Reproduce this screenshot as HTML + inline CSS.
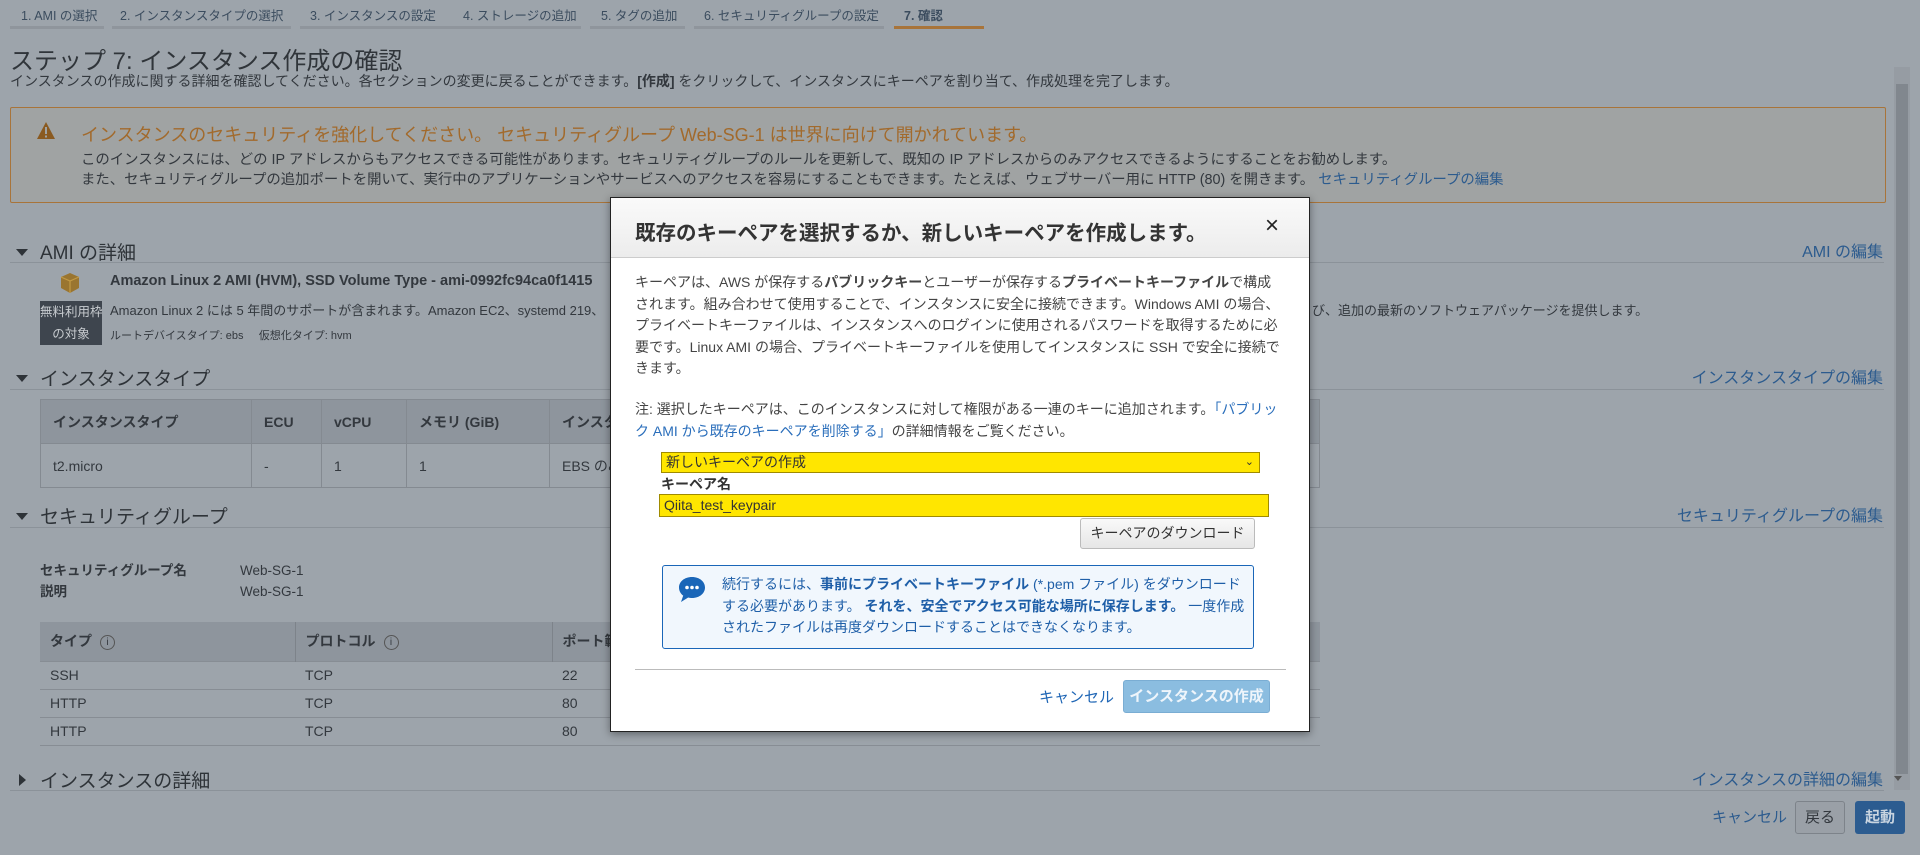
<!DOCTYPE html>
<html><head><meta charset="utf-8">
<style>
*{margin:0;padding:0;box-sizing:border-box}
body{width:1920px;height:855px;overflow:hidden;background:#9da4ab;font-family:"Liberation Sans","Noto Sans CJK JP",sans-serif;color:#33383e;position:relative;font-size:14px}
.a{position:absolute;white-space:nowrap}
.tab{position:absolute;top:5px;font-size:12.5px;color:#3b4c5e}
.tl{position:absolute;top:26px;height:3px;background:#8f959c}
.lnk{color:#2c5b8e}
.sec{position:absolute;left:14px;font-size:19px;color:#2e3338}
.sec:before{content:"";display:inline-block;border-left:6px solid transparent;border-right:6px solid transparent;border-top:7px solid #2e3338;margin:0 12px 3px 2px;vertical-align:middle}
.sec.r:before{border-top:6px solid transparent;border-bottom:6px solid transparent;border-left:7px solid #2e3338;border-right:0;margin:0 14px 3px 5px}
.hl{position:absolute;left:10px;width:1874px;height:1px;background:#8b9299}
.edit{position:absolute;right:37px;font-size:16px;color:#2c5b8e}
table{border-collapse:collapse;position:absolute}
.t1 td,.t1 th{border:1px solid #848a91;text-align:left;padding:0 12px;font-size:14px}
.t1 th{background:#8e959d;height:44px;font-weight:bold;color:#33383e}
.t1 td{height:44px}
.t2 th{background:#8e959d;height:39px;text-align:left;padding:0 10px;font-size:14px;font-weight:bold}
.t2 td{height:28px;border-top:1px solid #878d94;padding:0 10px;font-size:14px}
.t2 tr:last-child td{border-bottom:1px solid #878d94}
.ii{display:inline-block;width:15px;height:15px;border:1px solid #555;border-radius:50%;font-size:10px;text-align:center;line-height:13px;font-weight:normal;margin-left:8px;vertical-align:middle}
.modal{position:absolute;left:610px;top:197px;width:700px;height:535px;background:#fff;border:1px solid #222;box-shadow:0 2px 8px rgba(0,0,0,.4)}
.mh{height:60px;background:linear-gradient(#fafafa,#ececec);border-bottom:1px solid #ccc;position:relative}
.mb{font-size:14px;color:#444;line-height:21.5px}
</style></head><body>
<div class="tab" style="left:21px">1. AMI の選択</div>
<div class="tab" style="left:120px">2. インスタンスタイプの選択</div>
<div class="tab" style="left:310px">3. インスタンスの設定</div>
<div class="tab" style="left:463px">4. ストレージの追加</div>
<div class="tab" style="left:601px">5. タグの追加</div>
<div class="tab" style="left:704px">6. セキュリティグループの設定</div>
<div class="tab" style="left:904px;font-weight:bold">7. 確認</div>
<div class="tl" style="left:10px;width:94px"></div><div class="tl" style="left:112px;width:179px"></div><div class="tl" style="left:300px;width:152px"></div><div class="tl" style="left:452px;width:129px"></div><div class="tl" style="left:590px;width:95px"></div><div class="tl" style="left:694px;width:190px"></div><div class="tl" style="left:894px;width:90px;background:#a8743a"></div>

<div class="a" style="left:10px;top:41px;font-size:24px;color:#30353a">ステップ 7: インスタンス作成の確認</div>
<div class="a" style="left:10px;top:71px;font-size:14px">インスタンスの作成に関する詳細を確認してください。各セクションの変更に戻ることができます。<b>[作成]</b> をクリックして、インスタンスにキーペアを割り当て、作成処理を完了します。</div>

<div class="a" style="left:10px;top:107px;width:1876px;height:96px;background:#a0a3a3;border:1px solid #a8743a;border-radius:2px"></div>
<svg class="a" style="left:36px;top:121px" width="20" height="19" viewBox="0 0 20 19"><path d="M10 1L19 18H1Z" fill="#8a5a20"/><rect x="9" y="6" width="2" height="7" fill="#a0a3a3"/><rect x="9" y="14.5" width="2" height="2" fill="#a0a3a3"/></svg>
<div class="a" style="left:81px;top:121px;font-size:18px;color:#a26a2c">インスタンスのセキュリティを強化してください。 セキュリティグループ Web-SG-1 は世界に向けて開かれています。</div>
<div class="a" style="left:81px;top:148px;font-size:14.4px">このインスタンスには、どの IP アドレスからもアクセスできる可能性があります。セキュリティグループのルールを更新して、既知の IP アドレスからのみアクセスできるようにすることをお勧めします。</div>
<div class="a" style="left:81px;top:168px;font-size:14.4px">また、セキュリティグループの追加ポートを開いて、実行中のアプリケーションやサービスへのアクセスを容易にすることもできます。たとえば、ウェブサーバー用に HTTP (80) を開きます。 <span class="lnk">セキュリティグループの編集</span></div>

<div class="a" style="left:1894px;top:67px;width:16px;height:723px;background:#969ca3"></div>
<div class="a" style="left:1896px;top:84px;width:12px;height:690px;background:#81878e"></div>

<div class="sec" style="top:238px">AMI の詳細</div><div class="hl" style="top:262px"></div><div class="edit" style="top:238px">AMI の編集</div>
<svg class="a" style="left:60px;top:272px" width="20" height="22" viewBox="0 0 20 22"><path d="M10 1L19 5V16L10 21L1 16V5Z" fill="#9a7530"/><path d="M1 5L10 9L19 5M10 9V21" stroke="#c29a45" stroke-width="1.2" fill="none"/></svg>
<div class="a" style="left:40px;top:301px;width:62px;height:44px;background:#3e454e;color:#c8ccd0;font-size:12.5px;text-align:center;line-height:22px">無料利用枠<br>の対象</div>
<div class="a" style="left:110px;top:273px;font-size:14.5px;font-weight:bold">Amazon Linux 2 AMI (HVM), SSD Volume Type - ami-0992fc94ca0f1415</div>
<div class="a" style="left:110px;top:300px;font-size:13px">Amazon Linux 2 には 5 年間のサポートが含まれます。Amazon EC2、systemd 219、</div>
<div class="a" style="left:1312px;top:300px;font-size:13px">び、追加の最新のソフトウェアパッケージを提供します。</div>
<div class="a" style="left:110px;top:327px;font-size:11px">ルートデバイスタイプ: ebs &nbsp; &nbsp; 仮想化タイプ: hvm</div>

<div class="sec" style="top:364px">インスタンスタイプ</div><div class="hl" style="top:389px"></div><div class="edit" style="top:364px">インスタンスタイプの編集</div>
<table class="t1" style="left:40px;top:399px;width:1280px">
<tr><th style="width:211px">インスタンスタイプ</th><th style="width:70px">ECU</th><th style="width:85px">vCPU</th><th style="width:143px">メモリ (GiB)</th><th>インスタ</th></tr>
<tr><td>t2.micro</td><td>-</td><td>1</td><td>1</td><td>EBS のみ</td></tr></table>

<div class="sec" style="top:502px">セキュリティグループ</div><div class="hl" style="top:527px"></div><div class="edit" style="top:502px">セキュリティグループの編集</div>
<div class="a" style="left:40px;top:560px;font-size:13.5px;font-weight:bold;line-height:21px">セキュリティグループ名<br>説明</div>
<div class="a" style="left:240px;top:560px;font-size:13.5px;line-height:21px">Web-SG-1<br>Web-SG-1</div>
<table class="t2" style="left:40px;top:622px;width:1280px">
<tr><th style="width:255px">タイプ<span class="ii">i</span></th><th style="width:257px;border-left:1px solid #7d838a">プロトコル<span class="ii">i</span></th><th style="border-left:1px solid #7d838a">ポート範囲</th></tr>
<tr><td>SSH</td><td>TCP</td><td>22</td></tr><tr><td>HTTP</td><td>TCP</td><td>80</td></tr><tr><td>HTTP</td><td>TCP</td><td>80</td></tr></table>

<div class="sec r" style="top:766px">インスタンスの詳細</div>
<div class="hl" style="top:790px"></div><div class="edit" style="top:766px">インスタンスの詳細の編集</div>
<div class="a" style="left:1894px;top:776px;border-left:4px solid transparent;border-right:4px solid transparent;border-top:5px solid #555"></div>
<div class="a" style="left:1712px;top:806px;font-size:15px;color:#2c5b8e">キャンセル</div>
<div class="a" style="left:1795px;top:801px;width:50px;height:33px;background:#9aa0a7;border:1px solid #7d838a;border-radius:3px;font-size:15px;text-align:center;line-height:31px">戻る</div>
<div class="a" style="left:1855px;top:801px;width:50px;height:33px;background:#2c5c90;border-radius:3px;font-size:15px;color:#c8d4e0;font-weight:bold;text-align:center;line-height:33px">起動</div>

<div class="modal">
<div class="mh"><div class="a" style="left:24px;top:18px;font-size:20.5px;font-weight:bold;color:#333">既存のキーペアを選択するか、新しいキーペアを作成します。</div>
<div class="a" style="left:654px;top:14px;font-size:24px;color:#222">×</div></div>
<div class="a mb" style="left:24px;top:74px;white-space:normal;width:645px">キーペアは、AWS が保存する<b>パブリックキー</b>とユーザーが保存する<b>プライベートキーファイル</b>で構成されます。組み合わせて使用することで、インスタンスに安全に接続できます。Windows AMI の場合、プライベートキーファイルは、インスタンスへのログインに使用されるパスワードを取得するために必要です。Linux AMI の場合、プライベートキーファイルを使用してインスタンスに SSH で安全に接続できます。</div>
<div class="a mb" style="left:24px;top:201px;white-space:normal;width:650px">注: 選択したキーペアは、このインスタンスに対して権限がある一連のキーに追加されます。<span style="color:#2a6ebb">「パブリック AMI から既存のキーペアを削除する」</span>の詳細情報をご覧ください。</div>
<div class="a" style="left:50px;top:254px;width:599px;height:21px;background:#ffe600;border:1px solid #a08b00;font-size:14px;line-height:19px;padding-left:4px;color:#333">新しいキーペアの作成<span style="position:absolute;right:5px;font-size:11px">&#8964;</span></div>
<div class="a" style="left:50px;top:276px;font-size:14px;font-weight:bold;color:#333">キーペア名</div>
<div class="a" style="left:48px;top:296px;width:610px;height:23px;background:#ffe600;border:1px solid #a08b00;font-size:14px;line-height:21px;padding-left:4px;color:#333">Qiita_test_keypair</div>
<div class="a" style="left:469px;top:320px;width:175px;height:31px;background:linear-gradient(#f9f9f9,#e6e6e6);border:1px solid #bbb;border-radius:3px;font-size:14px;text-align:center;line-height:29px;color:#333">キーペアのダウンロード</div>
<div class="a" style="left:51px;top:367px;width:592px;height:84px;background:#f1f7fd;border:1px solid #1a66b8;border-radius:3px"></div>
<svg class="a" style="left:66px;top:377px" width="30" height="28" viewBox="0 0 30 28"><path d="M15 2C22.7 2 28 6.8 28 12.5S22.7 23 15 23C13.6 23 12.4 22.8 11.2 22.5L4 27L6.2 20.6C3.5 18.6 2 15.8 2 12.5 2 6.8 7.3 2 15 2Z" fill="#1a66b8"/><circle cx="10" cy="12.5" r="1.8" fill="#fff"/><circle cx="15" cy="12.5" r="1.8" fill="#fff"/><circle cx="20" cy="12.5" r="1.8" fill="#fff"/></svg>
<div class="a mb" style="left:111px;top:376px;white-space:normal;width:525px;color:#1f5fa8">続行するには、<b>事前にプライベートキーファイル</b> (*.pem ファイル) をダウンロードする必要があります。 <b>それを、安全でアクセス可能な場所に保存します。</b> 一度作成されたファイルは再度ダウンロードすることはできなくなります。</div>
<div class="a" style="left:24px;top:471px;width:651px;height:1px;background:#bbb"></div>
<div class="a" style="left:428px;top:488px;font-size:15px;color:#1f66b5">キャンセル</div>
<div class="a" style="left:512px;top:482px;width:147px;height:33px;background:#8bbde0;border:1px solid #7aadd3;border-radius:3px;font-size:15px;font-weight:bold;color:#eef5fb;text-align:center;line-height:31px">インスタンスの作成</div>
</div>
</body></html>
